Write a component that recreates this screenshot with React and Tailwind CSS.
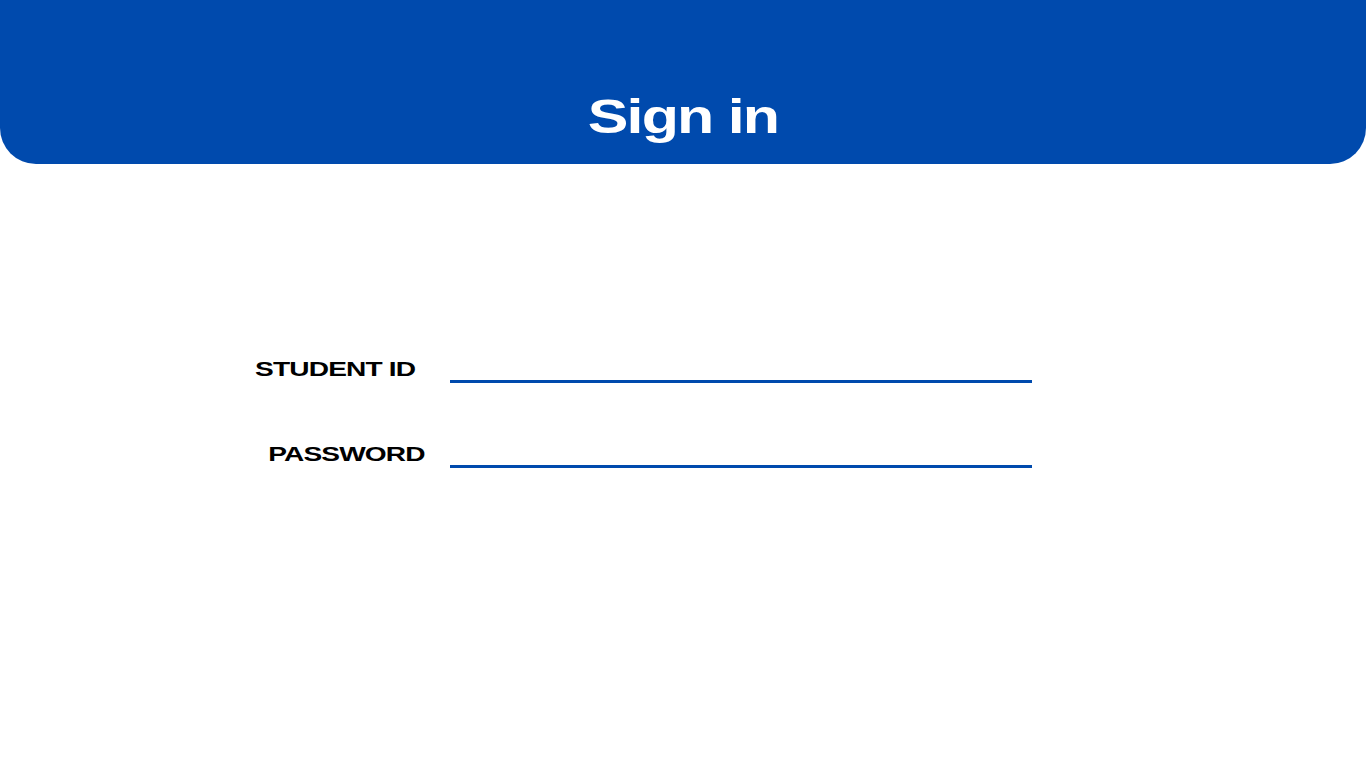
import React from "react";

const font = { fontFamily: '"Liberation Sans", Arial, sans-serif' };

function Field({ label, pr }) {
  return (
    <div className="flex h-[24px] items-end">
      <div className={`w-[450px] shrink-0 text-right ${pr}`}>
        <span className="mb-[3px] inline-block origin-right scale-x-[1.44] text-[19.5px] font-bold leading-none tracking-[-0.03em] text-black">
          {label}
        </span>
      </div>
      <div className="h-[3px] w-[582px] bg-[#004aad]" />
    </div>
  );
}

export default function App() {
  return (
    <div className="min-h-screen bg-white" style={font}>
      <header className="flex h-[164px] items-end justify-center rounded-b-[36px] bg-[#004aad] pb-[23px]">
        <h1 className="inline-block scale-x-[1.27] text-[48px] font-bold leading-none tracking-[-0.03em] text-white">
          Sign in
        </h1>
      </header>

      <div className="mt-[195px] flex flex-col gap-[61px]">
        <Field label="STUDENT ID" pr="pr-[35px]" />
        <Field label="PASSWORD" pr="pr-[25px]" />
      </div>
    </div>
  );
}
